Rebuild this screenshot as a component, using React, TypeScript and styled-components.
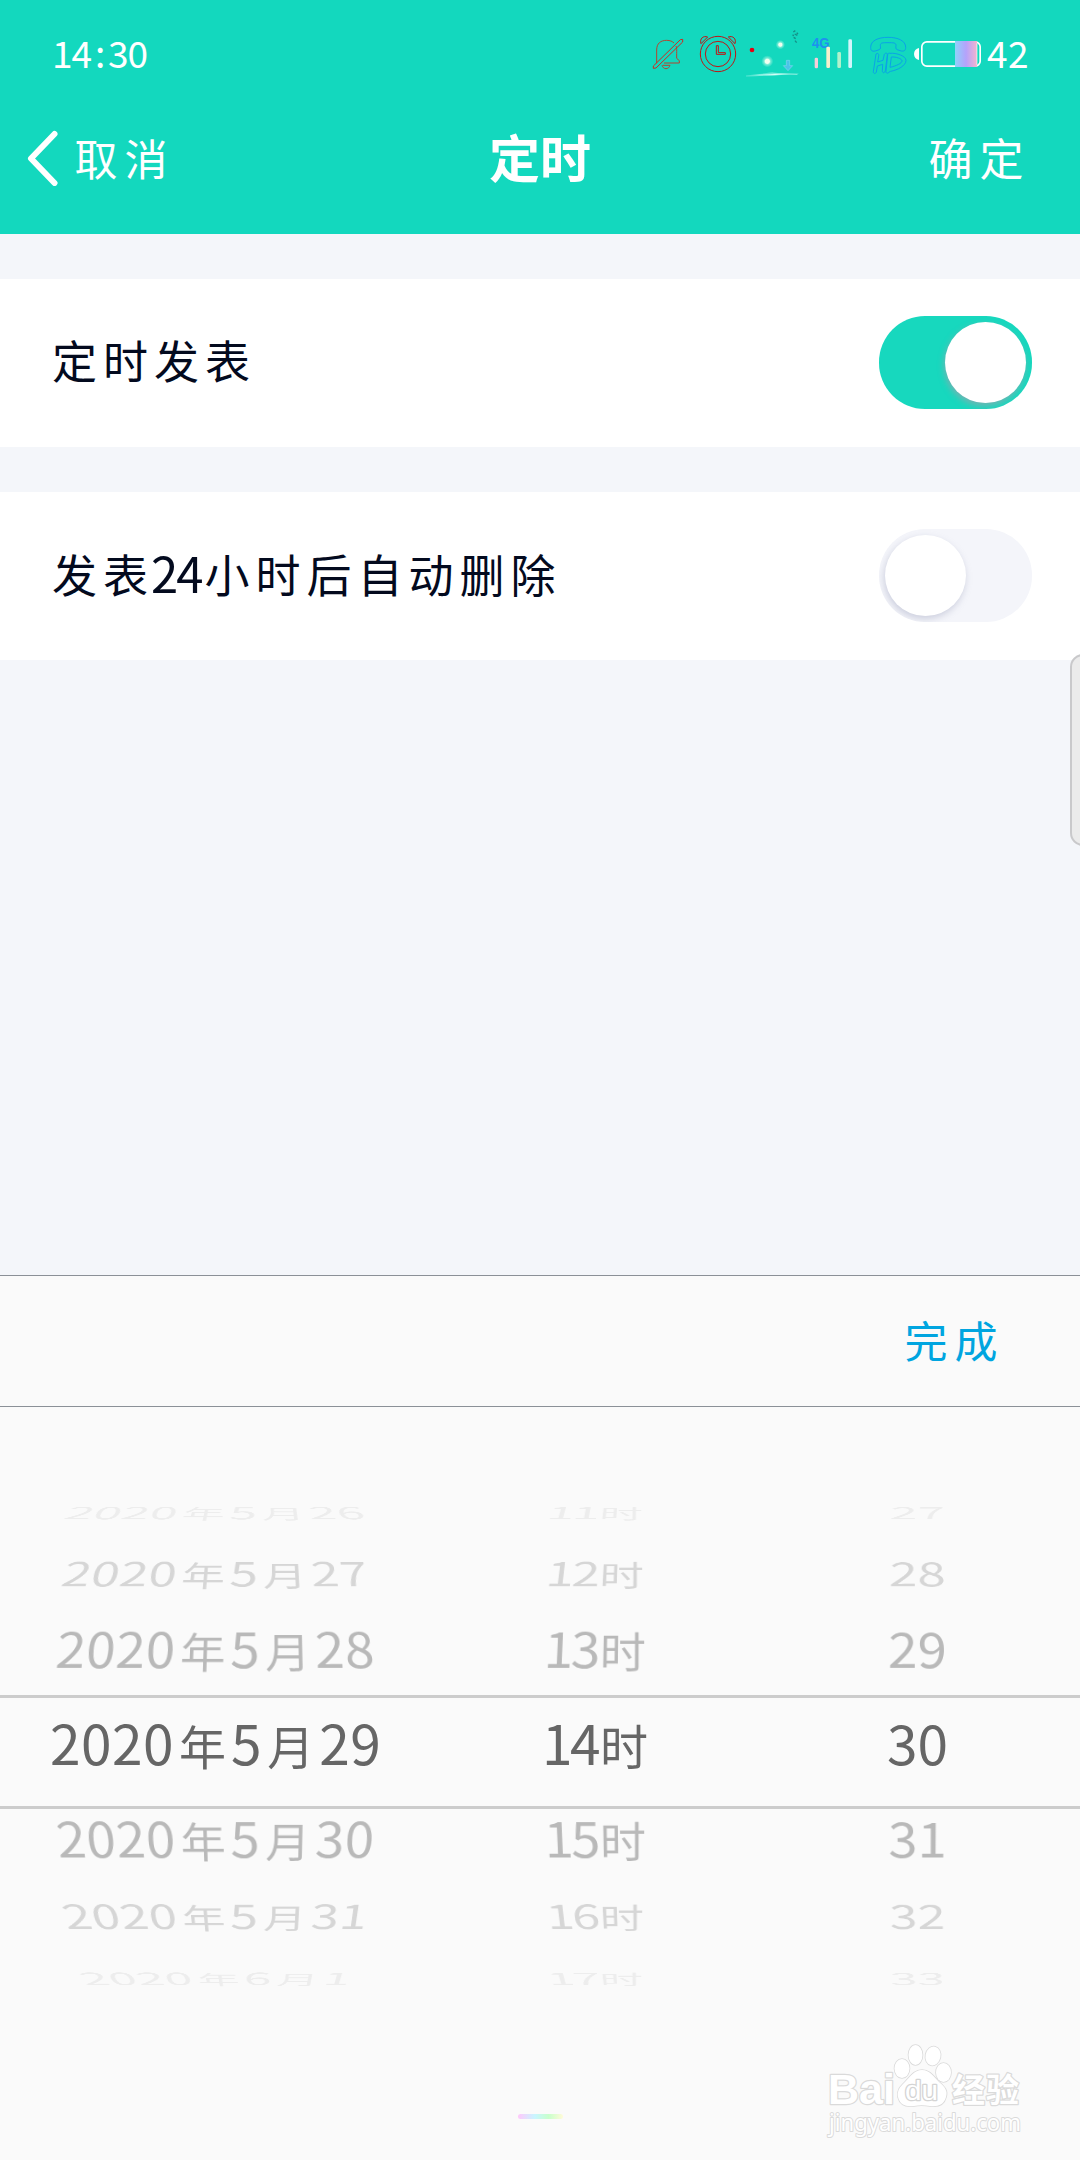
import React, { useState } from 'react';
import styled, { createGlobalStyle } from 'styled-components';

const GlobalStyle = createGlobalStyle`
  * { box-sizing: border-box; }
  body { margin: 0; background: #f4f6fa; }
`;

const Screen = styled.div`
  position: relative;
  width: 1080px;
  height: 2160px;
  overflow: hidden;
  display: flex;
  flex-direction: column;
  background: #f4f6fa;
  font-family: 'Noto Sans CJK SC', 'Noto Sans', sans-serif;
  font-weight: 400;
`;

/* ---------- text made of Han and digit runs ---------- */

const Run = styled.span`
  white-space: nowrap;
`;

const Han = styled.span<{ $size: number; $gap: number; $single: boolean }>`
  font-size: ${(p) => p.$size}px;
  letter-spacing: ${(p) => (p.$single ? 0 : p.$gap)}px;
  margin-left: ${(p) => p.$gap / 2}px;
  margin-right: ${(p) => (p.$single ? p.$gap / 2 : -p.$gap / 2)}px;
`;

const Digits = styled.span<{ $size: number; $gap: number }>`
  font-size: ${(p) => p.$size}px;
  letter-spacing: ${(p) => p.$gap}px;
`;

type MixedProps = { text: string; han: number; hanGap: number; num: number; numGap: number };

function Mixed({ text, han, hanGap, num, numGap }: MixedProps) {
  const parts = text.match(/[0-9]+|[^0-9]+/g) || [];
  return (
    <Run>
      {parts.map((part, i) =>
        /[0-9]/.test(part) ? (
          <Digits key={i} $size={num} $gap={numGap}>{part}</Digits>
        ) : (
          <Han key={i} $size={han} $gap={hanGap} $single={part.length === 1}>{part}</Han>
        )
      )}
    </Run>
  );
}

/* ---------- header ---------- */

const Header = styled.header`
  height: 234px;
  flex: none;
  background: #13d8be;
  color: #fff;
`;

const StatusBar = styled.div`
  height: 110px;
  padding: 0 51px 0 52px;
  display: flex;
  align-items: center;
  justify-content: space-between;
`;

const Clock = styled.div`
  font-size: 37px;
  line-height: 44px;
  margin-top: -6px;
  letter-spacing: -1px;
  white-space: nowrap;
`;

const Colon = styled.span`
  display: inline-block;
  width: 17px;
  text-align: center;
`;

const StatusIcons = styled.div`
  display: flex;
  align-items: center;
`;

const StatusIcon = styled.svg<{ $width: number; $before: number }>`
  display: block;
  flex: none;
  width: ${(p) => p.$width}px;
  height: 70px;
  margin-left: ${(p) => p.$before}px;
`;

const Percent = styled.div`
  font-size: 37px;
  line-height: 44px;
  margin: -7px 0 0 5px;
  letter-spacing: 0.5px;
`;

const NavBar = styled.nav`
  height: 96px;
  display: grid;
  grid-template-columns: 1fr auto 1fr;
  align-items: center;
  padding: 0 53px 0 25px;
`;

const NavButton = styled.button<{ $end?: boolean }>`
  justify-self: ${(p) => (p.$end ? 'end' : 'start')};
  display: flex;
  align-items: center;
  gap: 12px;
  padding: 0;
  border: 0;
  background: none;
  color: inherit;
  font-family: inherit;
  line-height: 44px;
`;

const Title = styled.h1`
  margin: 0 0 0 28px;
  font-size: 51px;
  line-height: 70px;
  font-weight: 700;
  padding-bottom: 4px;
`;

const NavText = styled.span`
  padding-top: 11px;
`;

/* ---------- setting rows ---------- */

const Setting = styled.section`
  flex: none;
  height: 168px;
  margin-top: 45px;
  padding: 0 48px 1px 49px;
  display: flex;
  align-items: center;
  justify-content: space-between;
  background: #fff;
  color: #030a1e;
`;

const SettingLabel = styled.div`
  line-height: 70px;
  padding-top: 6px;
`;

const Track = styled.button<{ $on: boolean }>`
  width: 153px;
  height: 93px;
  padding: 0 6px;
  border: 0;
  border-radius: 46px;
  overflow: hidden;
  display: flex;
  align-items: center;
  justify-content: ${(p) => (p.$on ? 'flex-end' : 'flex-start')};
  background: ${(p) => (p.$on ? '#17d8be' : '#f4f5fa')};
`;

const Knob = styled.span<{ $on: boolean }>`
  width: 81px;
  height: 81px;
  border-radius: 50%;
  background: #fff;
  box-shadow: ${(p) =>
    p.$on ? '-1px 3px 6px rgba(150, 165, 175, 0.75)' : '-1px 3px 7px rgba(140, 145, 175, 0.38)'};
`;

const EdgeHandle = styled.div`
  position: absolute;
  right: -20px;
  top: 654px;
  width: 30px;
  height: 192px;
  border: 2px solid #c9c9cb;
  border-radius: 13px;
  background: #ebebeb;
`;

/* ---------- picker ---------- */

const Picker = styled.section`
  margin-top: auto;
  height: 885px;
  flex: none;
  display: flex;
  flex-direction: column;
  background: #fafafa;
  border-top: 1px solid #8b9097;
`;

const PickerBar = styled.div`
  height: 131px;
  flex: none;
  display: flex;
  align-items: center;
  justify-content: flex-end;
  padding: 0 79px 0 0;
  border-bottom: 1px solid #8b9097;
`;

const Done = styled.button`
  padding: 10px 0 0;
  border: 0;
  background: none;
  font-family: inherit;
  line-height: 60px;
  color: #00a5e0;
`;

const Wheels = styled.div`
  padding-top: 76px;
`;

const WheelRow = styled.div<{ $height: number; $color: string; $active: boolean }>`
  height: ${(p) => p.$height}px;
  display: grid;
  grid-template-columns: 432px 328px 316px;
  align-items: center;
  color: ${(p) => p.$color};
  border: 0 solid #ccc;
  border-width: ${(p) => (p.$active ? '3px 0' : '0')};
  padding-bottom: ${(p) => (p.$active ? 15 : 0)}px;
`;

const WheelCell = styled.div<{ $tilt: number; $scale: number; $lean: number }>`
  justify-self: center;
  height: 80px;
  margin: -40px 0;
  line-height: 72px;
  white-space: nowrap;
  transform-origin: calc(50% + ${(p) => p.$lean}px) 50%;
  transform: translateX(${(p) => -p.$lean * (1 - p.$scale)}px) scale(${(p) => p.$scale})
    perspective(800px) rotateX(${(p) => p.$tilt}deg);
`;

const rows = [
  { cells: ['2020年5月26', '11时', '27'], height: 60, tilt: 70, scale: 0.9, color: '#ededed' },
  { cells: ['2020年5月27', '12时', '28'], height: 62, tilt: 49, scale: 0.92, color: '#d6d6d6' },
  { cells: ['2020年5月28', '13时', '29'], height: 90, tilt: 23, scale: 0.96, color: '#b9b9b9' },
  { cells: ['2020年5月29', '14时', '30'], height: 114, tilt: 0, scale: 1, color: '#666' },
  { cells: ['2020年5月30', '15时', '31'], height: 62, tilt: -23, scale: 0.96, color: '#b9b9b9' },
  { cells: ['2020年5月31', '16时', '32'], height: 91, tilt: -49, scale: 0.92, color: '#d6d6d6' },
  { cells: ['2020年6月1', '17时', '33'], height: 34, tilt: -70, scale: 0.9, color: '#ededed' },
];

const columns = [
  { lean: 50, han: 47, hanGap: 10, numGap: 0.5 },
  { lean: 45, han: 48, hanGap: 4, numGap: -2.5 },
  { lean: 10, han: 48, hanGap: 4, numGap: 0 },
];

const HomePill = styled.div`
  margin: 118px 0 0 518px;
  width: 45px;
  height: 5px;
  border-radius: 3px;
  background: linear-gradient(90deg, #ffc8fb, #c8f6ff 38%, #c8ffcc 68%, #fffbd8);
`;

const Watermark = styled.svg`
  position: absolute;
  left: 820px;
  top: 2036px;
  width: 210px;
  height: 104px;
`;

/* ---------- drawings ---------- */

const BellOff = () => (
  <StatusIcon $width={32} $before={0} viewBox="36 0 96 210" fill="none" stroke="#b5452f" strokeWidth="3">
    <path d="M50 130V90C50 70 62 61 80 61C90 61 97 64 102 69M108 78C111 85 110 92 110 100V115L118 122V129H72M66 136C68 142 72 146 78 146S88 142 90 136H68" />
    <path d="M40 145V138L121 59L128 58V66L48 144Z" stroke="#d0291f" />
  </StatusIcon>
);

const Alarm = () => (
  <StatusIcon $width={38} $before={15} viewBox="177 0 114 210" fill="none" stroke="#c01414" strokeWidth="3">
    <circle cx="234" cy="102" r="53" />
    <circle cx="234" cy="102" r="38" />
    <path d="M229 77H235V98H256V103H229ZM183 71C178 56 190 46 203 51L183 71ZM285 71C290 56 278 46 265 51L285 71Z" />
  </StatusIcon>
);

const Sparkles = () => (
  <StatusIcon $width={54} $before={9} viewBox="318 0 162 210">
    <defs>
      <radialGradient id="glow">
        <stop offset="0.35" stopColor="#f2fff0" />
        <stop offset="0.55" stopColor="#b8f7e4" stopOpacity="0.6" />
        <stop offset="1" stopColor="#a8f5e6" stopOpacity="0" />
      </radialGradient>
      <linearGradient id="streak">
        <stop offset="0" stopColor="#a0f6ea" stopOpacity="0.3" />
        <stop offset="0.55" stopColor="#d8fff8" />
        <stop offset="1" stopColor="#a0f6ea" stopOpacity="0.2" />
      </linearGradient>
    </defs>
    <circle cx="336" cy="90" r="7" fill="#e60012" />
    <circle cx="421" cy="74" r="14" fill="url(#glow)" />
    <circle cx="382" cy="124" r="18" fill="url(#glow)" />
    <path d="M439 121H449V137H458L444 152L430 137H439Z" fill="#4cc3e8" stroke="#7dd4f0" strokeWidth="2" />
    <path d="M318 166C360 160 400 158 476 164C430 164 370 167 318 170Z" fill="url(#streak)" />
    <path d="M380 156C410 160 440 161 476 161L470 164C430 164 400 160 380 156Z" fill="#9af1e4" />
    <path d="M460 36L466 32M464 42L472 46M461 52L467 56M470 38L474 42M465 62L470 68M458 44L461 48" stroke="#158f86" strokeWidth="4" />
  </StatusIcon>
);

const Signal = () => (
  <StatusIcon $width={42} $before={11} viewBox="513 0 126 210">
    <text x="516" y="83" fontFamily="Liberation Sans, sans-serif" fontWeight="700" fontSize="43" fill="#1e90f0" textLength="53" lengthAdjust="spacingAndGlyphs">4G</text>
    <rect x="524" y="113" width="10" height="32" rx="4" fill="#f8cdd8" />
    <rect x="559" y="80" width="11" height="64" rx="4" fill="#f7efcc" />
    <rect x="592" y="96" width="11" height="48" rx="4" fill="#b0f2cc" />
    <rect x="625" y="58" width="11" height="86" rx="4" fill="#d2f6fb" />
  </StatusIcon>
);

const CallHd = () => (
  <StatusIcon $width={37} $before={17} viewBox="60 0 111 210" fill="none" stroke="#0aa2e8" strokeWidth="3" strokeLinejoin="round">
    <path d="M62 82C62 62 84 52 114 52S167 62 167 82C167 92 162 94 154 93L141 89C137 87 137 82 138 76C138 68 130 68 114 68S91 68 91 76C92 82 92 87 88 89L76 93C66 95 62 92 62 82Z" />
    <path d="M78 102C84 98 87 102 86 108L83 126L99 121L103 103C106 98 113 98 112 105L106 152C104 160 97 160 97 152L98 133L82 138L79 156C77 162 70 162 70 155Z" />
    <path d="M119 100C140 98 168 108 168 121C168 138 142 150 122 154L117 156C114 162 107 160 108 154L113 104C114 99 118 98 119 100ZM124 111L120 142C138 138 157 130 156 122C155 116 138 110 124 111Z" />
  </StatusIcon>
);

const Battery = () => (
  <StatusIcon $width={69} $before={6} viewBox="189 0 207 210" fill="none">
    <defs>
      <linearGradient id="charge">
        <stop offset="0" stopColor="#8ed2fb" />
        <stop offset="0.5" stopColor="#b4a2fb" />
        <stop offset="1" stopColor="#f2b4cf" />
      </linearGradient>
    </defs>
    <path d="M207 84V120C198 118 192 112 192 102S198 86 207 84Z" fill="#fff" />
    <rect x="215.500" y="65.500" width="175" height="73" rx="15" stroke="#fff" strokeWidth="5" />
    <rect x="315" y="63" width="66" height="78" fill="url(#charge)" />
    <path d="M381 70V134" stroke="#fff" strokeWidth="2" />
  </StatusIcon>
);

const BackArrow = () => (
  <svg width="34" height="56" viewBox="0 0 34 56" fill="none">
    <path d="M29.500 4L6 28.500L29.500 53" stroke="#fff" strokeWidth="6" strokeLinecap="round" strokeLinejoin="round" />
  </svg>
);

const BaiduMark = () => (
  <Watermark viewBox="820 2036 210 104" fill="#fff" stroke="#dadada" strokeWidth="1.600" paintOrder="stroke" strokeLinejoin="round">
    <text x="828" y="2103.500" fontFamily="Liberation Sans, sans-serif" fontWeight="700" fontSize="43" textLength="67" lengthAdjust="spacingAndGlyphs" strokeWidth="2.500">Bai</text>
    <ellipse cx="902" cy="2068.500" rx="7.500" ry="9.500" />
    <ellipse cx="915.500" cy="2055" rx="7" ry="10" />
    <ellipse cx="933" cy="2056" rx="7.500" ry="9.500" transform="rotate(12 933 2056)" />
    <ellipse cx="943.500" cy="2072.500" rx="7.500" ry="9.500" />
    <path d="M922 2070C930 2070 934 2077 939 2082C945 2087 948 2091 946 2097C944 2105 937 2107 930 2106C924 2105 919 2105 914 2106C906 2107 900 2105 898 2097C897 2090 900 2087 905 2082C910 2077 914 2070 922 2070Z" />
    <text x="905" y="2100" fontFamily="Liberation Sans, sans-serif" fontSize="28" textLength="33" lengthAdjust="spacingAndGlyphs" stroke="#d4d4d4" strokeWidth="2.600">du</text>
    <text x="952" y="2102" fontFamily="Noto Sans CJK SC, sans-serif" fontWeight="700" fontSize="33" textLength="67" strokeWidth="2.500">经验</text>
    <text x="829" y="2131" fontFamily="Noto Sans, sans-serif" fontSize="23" textLength="192" lengthAdjust="spacingAndGlyphs" strokeWidth="2">jingyan.baidu.com</text>
  </Watermark>
);

function SettingRow({ label, initial }: { label: string; initial: boolean }) {
  const [on, setOn] = useState(initial);
  return (
    <Setting>
      <SettingLabel>
        <Mixed text={label} han={45} hanGap={6} num={49} numGap={-2} />
      </SettingLabel>
      <Track $on={on} role="switch" aria-checked={on} onClick={() => setOn(!on)}>
        <Knob $on={on} />
      </Track>
    </Setting>
  );
}

export default function App() {
  return (
    <Screen>
      <GlobalStyle />
      <Header>
        <StatusBar>
          <Clock>14<Colon>:</Colon>30</Clock>
          <StatusIcons>
            <BellOff />
            <Alarm />
            <Sparkles />
            <Signal />
            <CallHd />
            <Battery />
            <Percent>42</Percent>
          </StatusIcons>
        </StatusBar>
        <NavBar>
          <NavButton>
            <BackArrow />
            <NavText><Mixed text="取消" han={43} hanGap={7} num={44} numGap={0} /></NavText>
          </NavButton>
          <Title>定时</Title>
          <NavButton $end>
            <NavText><Mixed text="确定" han={44} hanGap={7} num={44} numGap={0} /></NavText>
          </NavButton>
        </NavBar>
      </Header>
      <SettingRow label="定时发表" initial />
      <SettingRow label="发表24小时后自动删除" initial={false} />
      <Picker>
        <PickerBar>
          <Done><Mixed text="完成" han={43} hanGap={7} num={44} numGap={0} /></Done>
        </PickerBar>
        <Wheels>
          {rows.map((row) => (
            <WheelRow key={row.cells[0]} $height={row.height} $color={row.color} $active={row.tilt === 0}>
              {row.cells.map((cell, i) => (
                <WheelCell key={i} $tilt={row.tilt} $scale={row.scale} $lean={columns[i].lean}>
                  <Mixed text={cell} han={columns[i].han} hanGap={columns[i].hanGap} num={55} numGap={columns[i].numGap} />
                </WheelCell>
              ))}
            </WheelRow>
          ))}
        </Wheels>
        <HomePill />
      </Picker>
      <EdgeHandle />
      <BaiduMark />
    </Screen>
  );
}
